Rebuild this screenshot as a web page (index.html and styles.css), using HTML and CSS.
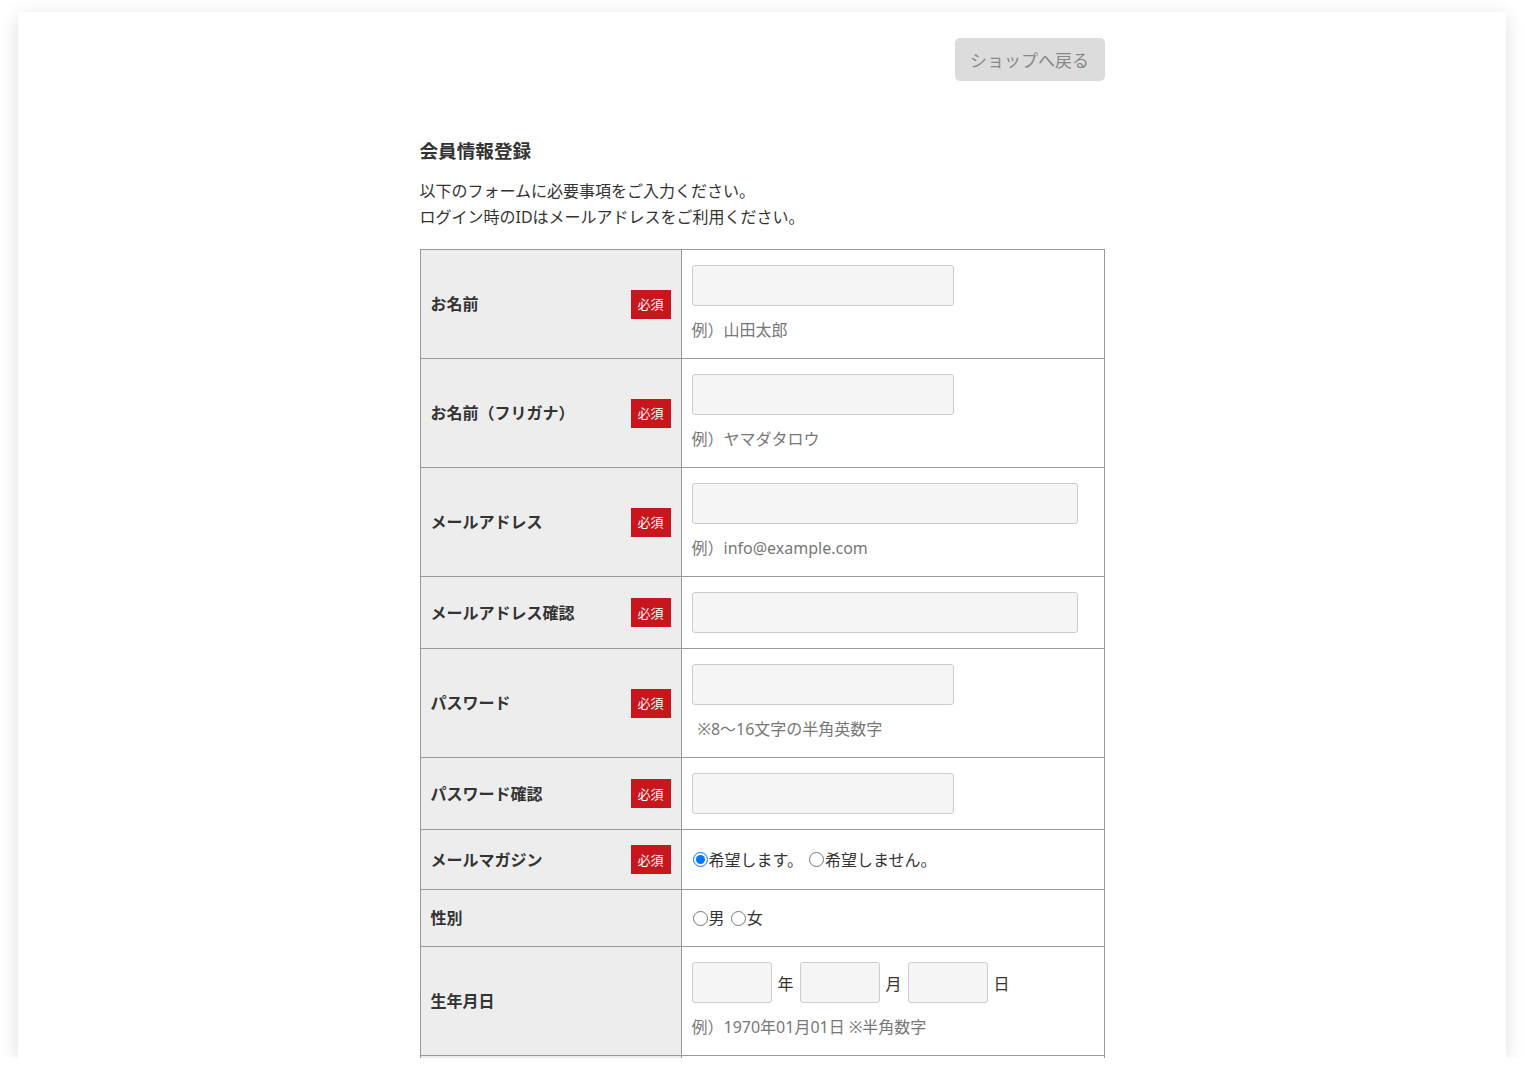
FILE: index.html
```html
<!DOCTYPE html>
<html lang="ja">
<head>
    <meta charset="UTF-8">
    <meta name="viewport" content="width=device-width, initial-scale=1.0">
    <title>会員情報登録</title>
    <link rel="stylesheet" href="styles.css">
</head>
<body>
    <div class="frame">
        <div class="container">
            <div class="top-bar">
                <a class="back-btn" href="#">ショップへ戻る</a>
            </div>

            <h2 class="page-title">会員情報登録</h2>
            <p class="lead">以下のフォームに必要事項をご入力ください。<br>ログイン時のIDはメールアドレスをご利用ください。</p>

            <table class="form-table">
                <tr>
                    <th><div class="label"><span>お名前</span><span class="req">必須</span></div></th>
                    <td>
                        <input type="text" class="input">
                        <p class="hint">例）山田太郎</p>
                    </td>
                </tr>
                <tr>
                    <th><div class="label"><span>お名前（フリガナ）</span><span class="req">必須</span></div></th>
                    <td>
                        <input type="text" class="input">
                        <p class="hint">例）ヤマダタロウ</p>
                    </td>
                </tr>
                <tr>
                    <th><div class="label"><span>メールアドレス</span><span class="req">必須</span></div></th>
                    <td>
                        <input type="text" class="input wide">
                        <p class="hint">例）info@example.com</p>
                    </td>
                </tr>
                <tr>
                    <th><div class="label"><span>メールアドレス確認</span><span class="req">必須</span></div></th>
                    <td>
                        <input type="text" class="input wide">
                    </td>
                </tr>
                <tr>
                    <th><div class="label"><span>パスワード</span><span class="req">必須</span></div></th>
                    <td>
                        <input type="password" class="input">
                        <p class="hint indent">※8〜16文字の半角英数字</p>
                    </td>
                </tr>
                <tr>
                    <th><div class="label"><span>パスワード確認</span><span class="req">必須</span></div></th>
                    <td>
                        <input type="password" class="input">
                    </td>
                </tr>
                <tr>
                    <th><div class="label"><span>メールマガジン</span><span class="req">必須</span></div></th>
                    <td>
                        <label class="radio"><input type="radio" name="mag" checked>希望します。</label>
                        <label class="radio"><input type="radio" name="mag">希望しません。</label>
                    </td>
                </tr>
                <tr>
                    <th><div class="label"><span>性別</span></div></th>
                    <td>
                        <label class="radio"><input type="radio" name="sex">男</label>
                        <label class="radio"><input type="radio" name="sex">女</label>
                    </td>
                </tr>
                <tr>
                    <th><div class="label"><span>生年月日</span></div></th>
                    <td>
                        <div class="birth">
                            <input type="text" class="input small"><span>年</span>
                            <input type="text" class="input small"><span>月</span>
                            <input type="text" class="input small"><span>日</span>
                        </div>
                        <p class="hint">例）1970年01月01日 ※半角数字</p>
                    </td>
                </tr>
                <!-- 次の行は画面下で切れている -->
                <tr class="cut-row">
                    <th></th>
                    <td></td>
                </tr>
            </table>
        </div>
    </div>
</body>
</html>
```

FILE: styles.css
```css
body {
    margin: 0;
    background-color: #fff;
    font-family: "Noto Sans", "Noto Sans CJK JP", sans-serif;
    color: #333;
}
.frame {
    margin: 12px 18px 0;
    height: 1046px;
    overflow: hidden;
    background-color: #fff;
    box-shadow: 0 4px 18px rgba(0, 0, 0, 0.13);
}
.container {
    width: 685px;
    margin: 0 auto;
    padding-top: 26px;
}
.top-bar {
    display: flex;
    justify-content: flex-end;
}
.back-btn {
    display: flex;
    align-items: center;
    justify-content: center;
    width: 150px;
    height: 43px;
    background-color: #dcdcdc;
    border-radius: 5px;
    color: #888;
    font-size: 17px;
    text-decoration: none;
}
.page-title {
    margin: 56px 0 0;
    font-size: 18.6px;
    line-height: 28px;
    font-weight: bold;
    color: #333;
}
.lead {
    margin: 13px 0 0;
    font-size: 16px;
    line-height: 26px;
}
.form-table {
    width: 100%;
    margin-top: 19px;
    border-collapse: collapse;
    font-size: 16px;
}
.form-table th,
.form-table td {
    border: 1px solid #999;
    padding: 15px 10px;
    vertical-align: middle;
    text-align: left;
}
.form-table th {
    width: 240px;
    background-color: #ededed;
    font-weight: bold;
}
.cut-row th,
.cut-row td {
    height: 60px;
}
.label {
    display: flex;
    align-items: center;
    justify-content: space-between;
    line-height: 26px;
}
.req {
    display: flex;
    align-items: center;
    justify-content: center;
    width: 40px;
    height: 29px;
    background-color: #c8161d;
    color: #fff;
    font-size: 13px;
    font-weight: normal;
}
.input {
    display: block;
    box-sizing: border-box;
    width: 262px;
    height: 41px;
    margin: 0;
    background-color: #f5f5f5;
    border: 1px solid #ccc;
    border-radius: 3px;
}
.input.wide {
    width: 386px;
}
.input.small {
    width: 80px;
}
.hint {
    margin: 11px 0 0;
    line-height: 26px;
    color: #777;
    font-size: 16px;
}
.hint.indent {
    padding-left: 6px;
}
.radio {
    display: inline-flex;
    align-items: center;
    margin-right: 1px;
    line-height: 26px;
}
.radio input {
    width: 15px;
    height: 15px;
    margin: 0 1px;
}
.birth {
    display: flex;
    align-items: center;
}
.birth span {
    margin: 0 6px;
}
```
